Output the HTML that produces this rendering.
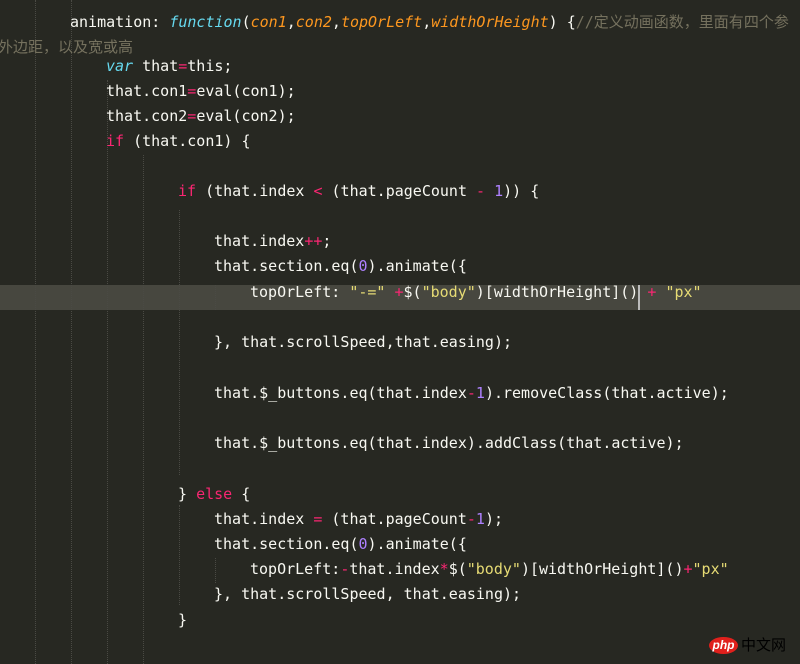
<!DOCTYPE html>
<html><head><meta charset="utf-8"><style>
body{margin:0;width:800px;height:664px;background:#272822;overflow:hidden;position:relative;font-family:"DejaVu Sans Mono","Liberation Mono",monospace;font-size:15px;color:#f8f8f2}
.l{position:absolute;white-space:pre;line-height:20px;height:20px}
.k{color:#f92672}.f{color:#66d9ef;font-style:italic}.p{color:#fd971f;font-style:italic}.s{color:#e6db74}.n{color:#ae81ff}.c{color:#75715e;font-family:"DejaVu Sans Mono","Noto Sans CJK SC",monospace}
.g{position:absolute;width:0;border-left:1px dotted #4a4a44}
.hl{position:absolute;left:0;top:285px;width:800px;height:25px;background:#47473f}
</style></head><body>
<div class="hl"></div>
<div class="g" style="left:35px;top:0;height:664px"></div>
<div class="g" style="left:71px;top:0;height:664px"></div>
<div class="g" style="left:107px;top:80px;height:584px"></div>
<div class="g" style="left:143px;top:155px;height:509px"></div>
<div class="g" style="left:179px;top:210px;height:265px"></div>
<div class="g" style="left:215px;top:285px;height:25px"></div>
<div class="g" style="left:179px;top:505px;height:100px"></div>
<div class="g" style="left:215px;top:558px;height:25px"></div>
<div class="l" style="left:70px;top:12px">animation: <span class="f">function</span>(<span class="p">con1</span>,<span class="p">con2</span>,<span class="p">topOrLeft</span>,<span class="p">widthOrHeight</span>) {<span class="c">//定义动画函数，里面有四个参</span></div>
<div class="l c" style="left:-2px;top:37px">外边距，以及宽或高</div>
<div class="l" style="left:106px;top:56px"><span class="f">var</span> that<span class="k">=</span>this;</div>
<div class="l" style="left:106px;top:81px">that.con1<span class="k">=</span>eval(con1);</div>
<div class="l" style="left:106px;top:106px">that.con2<span class="k">=</span>eval(con2);</div>
<div class="l" style="left:106px;top:131px"><span class="k">if</span> (that.con1) {</div>
<div class="l" style="left:178px;top:181px"><span class="k">if</span> (that.index <span class="k">&lt;</span> (that.pageCount <span class="k">-</span> <span class="n">1</span>)) {</div>
<div class="l" style="left:214px;top:231px">that.index<span class="k">++</span>;</div>
<div class="l" style="left:214px;top:256px">that.section.eq(<span class="n">0</span>).animate({</div>
<div class="l" style="left:250px;top:282px">topOrLeft: <span class="s">"-="</span> <span class="k">+</span>$(<span class="s">"body"</span>)[widthOrHeight]() <span class="k">+</span> <span class="s">"px"</span></div>
<div style="position:absolute;left:638px;top:285px;width:2px;height:25px;background:#bbb"></div>
<div class="l" style="left:214px;top:332px">}, that.scrollSpeed,that.easing);</div>
<div class="l" style="left:214px;top:383px">that.$_buttons.eq(that.index<span class="k">-</span><span class="n">1</span>).removeClass(that.active);</div>
<div class="l" style="left:214px;top:433px">that.$_buttons.eq(that.index).addClass(that.active);</div>
<div class="l" style="left:178px;top:484px">} <span class="k">else</span> {</div>
<div class="l" style="left:214px;top:509px">that.index <span class="k">=</span> (that.pageCount<span class="k">-</span><span class="n">1</span>);</div>
<div class="l" style="left:214px;top:534px">that.section.eq(<span class="n">0</span>).animate({</div>
<div class="l" style="left:250px;top:559px">topOrLeft:<span class="k">-</span>that.index<span class="k">*</span>$(<span class="s">"body"</span>)[widthOrHeight]()<span class="k">+</span><span class="s">"px"</span></div>
<div class="l" style="left:214px;top:584px">}, that.scrollSpeed, that.easing);</div>
<div class="l" style="left:178px;top:610px">}</div>
<div style="position:absolute;left:709px;top:637px;width:29px;height:17px;border-radius:50%;background:#e0201c;color:#fff;font:italic bold 12px 'Liberation Sans',sans-serif;text-align:center;line-height:16px">php</div>
<div style="position:absolute;left:741px;top:636px;font:15px 'Noto Sans CJK SC',sans-serif;color:#000;line-height:18px">中文网</div>
</body></html>
